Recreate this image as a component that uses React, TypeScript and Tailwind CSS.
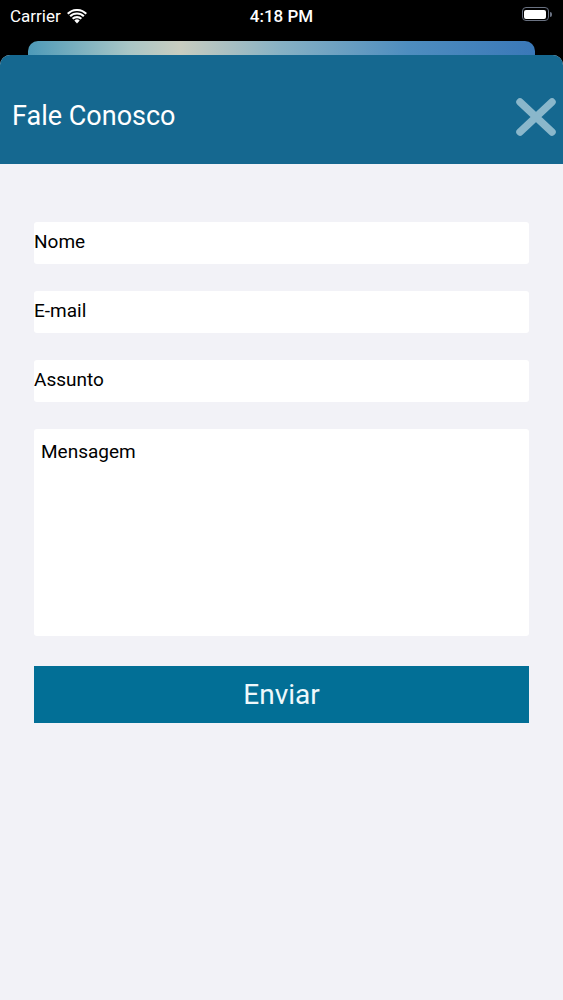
function StatusBar() {
  return (
    <div className="h-[41px] bg-black flex items-start justify-between px-[10px] pt-[4px] text-white text-[17px] font-['Roboto','Liberation_Sans',sans-serif]">
      <div className="flex items-center gap-[6px] w-[120px]">
        <span>Carrier</span>
        <svg width="20" height="15" viewBox="0 0 20 15" fill="white">
          <path d="M10 14.5 7.3 11.6a3.8 3.8 0 0 1 5.4 0Z" />
          <path d="M4.9 9.1a7.3 7.3 0 0 1 10.2 0l-1.5 1.5a5.2 5.2 0 0 0-7.2 0Z" />
          <path d="M2.4 6.6a10.8 10.8 0 0 1 15.2 0l-1.5 1.5a8.7 8.7 0 0 0-12.2 0Z" />
          <path d="M0 4.1a14.2 14.2 0 0 1 20 0l-1.5 1.5a12.1 12.1 0 0 0-17 0Z" />
        </svg>
      </div>
      <span className="font-medium">4:18 PM</span>
      <div className="w-[120px] flex justify-end pt-[3px] pr-[1px]">
        <div className="flex items-center">
          <div className="w-[27px] h-[14px] rounded-[4px] border border-gray-500 p-[1.5px]">
            <div className="w-full h-full bg-white rounded-[2px]" />
          </div>
          <div className="w-[2px] h-[5px] bg-gray-500 rounded-r-sm ml-[1px]" />
        </div>
      </div>
    </div>
  );
}

const fields = ["Nome", "E-mail", "Assunto"];

export default function App() {
  return (
    <div className="w-[563px] h-[1000px] bg-black overflow-hidden font-['Roboto','Liberation_Sans',sans-serif]">
      <StatusBar />
      <div className="mx-[28px] h-[14px] rounded-t-[10px] bg-[linear-gradient(90deg,#4d9ab8_0%,#a9c6c6_20%,#c9cdc0_30%,#86b1c4_50%,#4e8dbf_75%,#3a78b8_100%)]" />
      <div className="bg-[#f2f2f7] rounded-t-[10px] h-[945px] overflow-hidden">
        <div className="h-[109px] bg-[#156890] flex items-center justify-between pl-[12px] pr-[6px] pt-[14px]">
          <h1 className="text-white text-[27px] leading-none">Fale Conosco</h1>
          {/* close button */}
          <svg width="42" height="40" viewBox="0 0 42 40">
            <path d="M5 5 37 35M37 5 5 35" stroke="#8ab7cb" strokeWidth="7.5" strokeLinecap="round" />
          </svg>
        </div>
        <div className="px-[34px] pt-[58px] flex flex-col">
          {fields.map((f) => (
            <div key={f} className="h-[42px] mb-[27px] bg-white rounded-[3px] flex items-center pb-[2px] text-[19px] text-black">
              {f}
            </div>
          ))}
          <div className="h-[207px] bg-white rounded-[3px] px-[7px] pt-[9px] text-[19px] text-black">
            Mensagem
          </div>
          <button className="mt-[30px] h-[57px] bg-[#026f96] text-[#eef8fb] text-[28px] flex items-center justify-center">
            Enviar
          </button>
        </div>
      </div>
    </div>
  );
}
